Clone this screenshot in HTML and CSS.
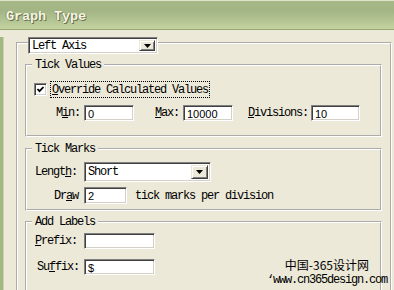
FILE: index.html
```html
<!DOCTYPE html>
<html lang="en">
<head>
    <meta charset="UTF-8">
    <meta name="viewport" content="width=device-width, initial-scale=1.0">
    <title>Graph Type</title>
    <link rel="stylesheet" href="styles.css">
</head>
<body>
    <div class="titlebar">Graph Type</div>
    <div class="client">
        <fieldset class="axis-group">
            <legend class="axis-legend">
                <div class="combo combo-axis">
                    <span class="combo-text">Left Axis</span>
                    <span class="combo-button"><svg width="7" height="4" viewBox="0 0 7 4"><polygon points="0,0 7,0 3.5,4" fill="#000"/></svg></span>
                </div>
            </legend>

            <fieldset class="group group-values">
                <legend>Tick Values</legend>
                <div class="row row-check">
                    <span class="checkbox"><svg width="9" height="9" viewBox="0 0 9 9"><polyline points="1.5,4 3.5,6.2 7.5,2" fill="none" stroke="#000" stroke-width="1.8"/></svg></span>
                    <span class="focus"><u>O</u>verride Calculated Values</span>
                </div>
                <div class="row row-range">
                    <span class="lbl lbl-min">M<u>i</u>n:</span>
                    <span class="field field-range">0</span>
                    <span class="lbl lbl-max"><u>M</u>ax:</span>
                    <span class="field field-range">10000</span>
                    <span class="lbl lbl-div"><u>D</u>ivisions:</span>
                    <span class="field field-div">10</span>
                </div>
            </fieldset>

            <fieldset class="group group-marks">
                <legend>Tick Marks</legend>
                <div class="row row-length">
                    <span class="lbl lbl-length">Lengt<u>h</u>:</span>
                    <div class="combo combo-length">
                        <span class="combo-text">Short</span>
                        <span class="combo-button"><svg width="7" height="4" viewBox="0 0 7 4"><polygon points="0,0 7,0 3.5,4" fill="#000"/></svg></span>
                    </div>
                </div>
                <div class="row row-draw">
                    <span class="lbl lbl-draw">Dr<u>a</u>w</span>
                    <span class="field field-draw">2</span>
                    <span class="lbl lbl-per">tick marks per division</span>
                </div>
            </fieldset>

            <fieldset class="group group-labels">
                <legend>Add Labels</legend>
                <div class="row row-prefix">
                    <span class="lbl lbl-prefix"><u>P</u>refix:</span>
                    <span class="field field-text"></span>
                </div>
                <div class="row row-suffix">
                    <span class="lbl lbl-suffix">Su<u>f</u>fix:</span>
                    <span class="field field-text">$</span>
                </div>
            </fieldset>
        </fieldset>

        <div class="watermark">
            <div class="wm-cn">中国-365设计网</div>
            <div class="wm-url">‘www.cn365design.com</div>
        </div>
    </div>
</body>
</html>
```

FILE: styles.css
```css
* {
    box-sizing: border-box;
}
html, body {
    margin: 0;
    padding: 0;
}
body {
    width: 394px;
    height: 290px;
    overflow: hidden;
    background: #ece9d8;
    color: #000;
    font-family: "Liberation Mono", monospace;
    font-size: 12px;
    letter-spacing: -1.2px;
    line-height: 12px;
}
u {
    text-decoration: underline;
    text-underline-offset: 1px;
}

/* title bar */
.titlebar {
    height: 30px;
    padding: 8px 0 0 6px;
    border-top: 1px solid #dde2c8;
    border-bottom: 1px solid #97a877;
    background: linear-gradient(#a6b888 0%, #a3b585 35%, #b4c593 70%, #c5d4a1 100%);
    color: #f6f4e2;
    font-weight: bold;
    font-size: 13.5px;
    letter-spacing: -0.1px;
    line-height: 16px;
    text-shadow: 1px 1px 0 #66734c, -1px 0 0 #8b9a6c;
}

/* dialog body */
.client {
    position: relative;
    height: 260px;
    border-left: 3px solid #a2b884;
    box-shadow: inset 1px 0 0 #c8d5ae;
}
.axis-group {
    margin: 7px 2px 0 13px;
    padding: 10px 8px 0 7px;
    border: 2px groove #fff;
    min-width: 0;
}
.axis-legend {
    margin-left: 3px;
    padding: 0;
    height: 12px;
}
.group {
    margin: 0;
    padding: 0 7px;
    border: 2px groove #fff;
    min-width: 0;
}
.group legend {
    margin-left: -2px;
    padding: 0 3px;
    height: 12px;
    line-height: 12px;
}
.group-values {
    padding-top: 10px;
    padding-bottom: 14px;
}
.group-marks {
    margin-top: 6px;
    padding-top: 7px;
    padding-bottom: 5px;
}
.group-labels {
    margin-top: 5px;
    padding-top: 5px;
    padding-bottom: 16px;
}

.row {
    display: flex;
    align-items: center;
}
.row-check {
    height: 17px;
}
.row-range {
    margin-top: 7px;
    padding-left: 22px;
}
.row-draw {
    margin-top: 5px;
}
.row-suffix {
    margin-top: 10px;
}

/* labels */
.lbl {
    white-space: nowrap;
}
.lbl-min { width: 28px; }
.lbl-max { width: 28px; margin-left: 21px; }
.lbl-div { width: 63px; margin-left: 15px; }
.lbl-length { width: 49px; margin-left: 1px; }
.lbl-draw { width: 30px; margin-left: 20px; }
.lbl-per { margin-left: 8px; }
.lbl-prefix { width: 49px; margin-left: 1px; }
.lbl-suffix { width: 47px; margin-left: 3px; }

/* checkbox */
.checkbox {
    display: flex;
    align-items: center;
    justify-content: center;
    width: 13px;
    height: 13px;
    background: #fff;
    border: 1px solid;
    border-color: #808080 #fff #fff #808080;
    box-shadow: inset 1px 1px 0 #404040, inset -1px -1px 0 #d4d0c8;
}
.focus {
    margin-left: 3px;
    padding: 2px 1px 1px 1px;
    border: 1px dotted #000;
    white-space: nowrap;
}

/* edit fields */
.field {
    display: block;
    height: 16px;
    padding: 2px 0 0 3px;
    background: #fff;
    border: 1px solid;
    border-color: #808080 #fff #fff #808080;
    box-shadow: inset 1px 1px 0 #404040, inset -1px -1px 0 #d4d0c8;
    font-family: "Liberation Sans", sans-serif;
    font-size: 11px;
    letter-spacing: 0;
    line-height: 12px;
}
.field-range { width: 50px; }
.field-div { width: 49px; }
.field-draw { width: 43px; height: 17px; }
.field-text { width: 71px; }

/* combo boxes */
.combo {
    display: flex;
    align-items: stretch;
    background: #fff;
    border: 1px solid;
    border-color: #808080 #fff #fff #808080;
    box-shadow: inset 1px 1px 0 #404040, inset -1px -1px 0 #d4d0c8;
    padding: 2px;
}
.combo-axis {
    width: 130px;
    height: 17px;
}
.combo-length {
    width: 127px;
    height: 20px;
}
.combo-text {
    flex: 1;
    display: flex;
    align-items: center;
    padding-left: 1px;
    white-space: nowrap;
}
.combo-button {
    display: flex;
    align-items: center;
    justify-content: center;
    width: 16px;
    background: #ece9d8;
    border: 1px solid;
    border-color: #ece9d8 #404040 #404040 #ece9d8;
    box-shadow: inset 1px 1px 0 #fff, inset -1px -1px 0 #808080;
}
.combo-length .combo-button {
    width: 17px;
}

/* watermark stamped over the corner */
.watermark {
    position: absolute;
    right: 7px;
    bottom: 11px;
    text-align: right;
}
.wm-cn {
    padding-right: 18px;
    font-family: "Noto Sans CJK SC", sans-serif;
    font-size: 12px;
    letter-spacing: 0;
    line-height: 14px;
    height: 14px;
}
.wm-url {
    margin-top: 2px;
    height: 12px;
    line-height: 12px;
}
```
